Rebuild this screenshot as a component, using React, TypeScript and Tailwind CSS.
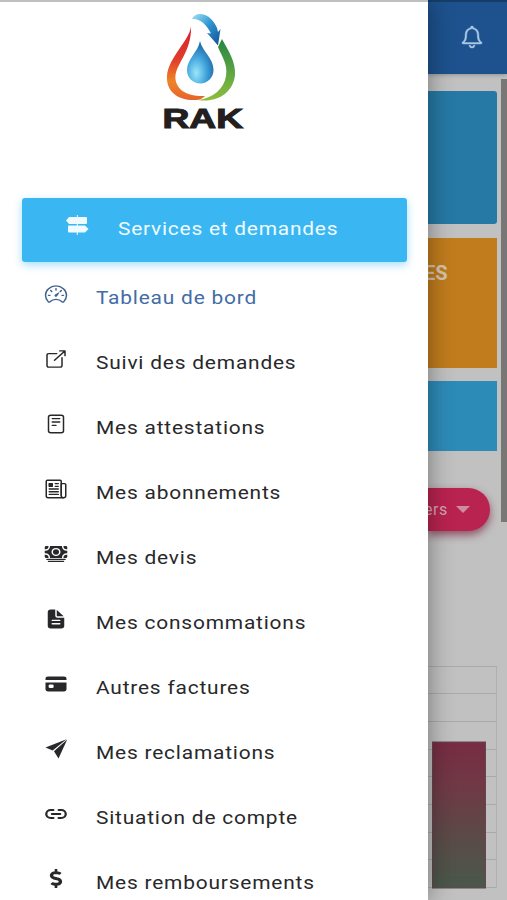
import React from 'react';
import {
  IoSpeedometerOutline,
  IoOpenOutline,
  IoReaderOutline,
  IoNewspaperOutline,
  IoCash,
  IoDocumentText,
  IoCard,
  IoLink,
} from 'react-icons/io5';
import { IoIosNotificationsOutline } from 'react-icons/io';
import { FaDollarSign } from 'react-icons/fa';

const PlaneIcon = ({ className }: { className?: string }) => (
  <svg viewBox="0 0 24 24" fill="currentColor" className={className}>
    <path d="M22.500 1.200L1.500 10.200l7.200 3.600z" />
    <path d="M23.200 1.500L10 14.600l4.500 7.900z" />
  </svg>
);

const menuItems = [
  { label: 'Tableau de bord', icon: IoSpeedometerOutline, className: 'size-6 scale-y-90 text-[#41638d]', active: true },
  { label: 'Suivi des demandes', icon: IoOpenOutline, className: 'size-6 scale-y-90' },
  { label: 'Mes attestations', icon: IoReaderOutline, className: 'size-6 scale-y-90' },
  { label: 'Mes abonnements', icon: IoNewspaperOutline, className: 'size-6 scale-y-90' },
  { label: 'Mes devis', icon: IoCash, className: 'size-6 scale-y-90' },
  { label: 'Mes consommations', icon: IoDocumentText, className: 'size-6 scale-y-90' },
  { label: 'Autres factures', icon: IoCard, className: 'size-6 scale-y-90' },
  { label: 'Mes reclamations', icon: PlaneIcon, className: 'size-6 scale-y-90' },
  { label: 'Situation de compte', icon: IoLink, className: 'size-6 scale-y-90' },
  { label: 'Mes remboursements', icon: FaDollarSign, className: 'mx-[2px] h-[19px] w-[20px] scale-x-115' },
];

const Logo = () => (
  <svg width="84" height="124" viewBox="0 0 84 124" className="ml-[161px]">
    <defs>
      <linearGradient id="warm" x1="0" y1="0" x2="0" y2="1">
        <stop offset="0" stopColor="#d71f30" />
        <stop offset="0.45" stopColor="#e13c2b" />
        <stop offset="0.75" stopColor="#ef8427" />
        <stop offset="1" stopColor="#e5632c" />
      </linearGradient>
      <linearGradient id="green" x1="0" y1="0" x2="0" y2="1">
        <stop offset="0" stopColor="#258444" />
        <stop offset="0.6" stopColor="#64a943" />
        <stop offset="1" stopColor="#8fbd3c" />
      </linearGradient>
      <linearGradient id="arrow" x1="0" y1="0" x2="1" y2="1">
        <stop offset="0" stopColor="#a5e3f4" />
        <stop offset="0.45" stopColor="#2e97d2" />
        <stop offset="1" stopColor="#124d94" />
      </linearGradient>
      <radialGradient id="drop" cx="0.35" cy="0.75" r="0.75">
        <stop offset="0" stopColor="#9be6fb" />
        <stop offset="0.5" stopColor="#43a5dc" />
        <stop offset="1" stopColor="#17619f" />
      </radialGradient>
    </defs>
    <path
      d="M30 16C29 30 7 48 6 66C5 83 19 91 35 90C39 90 42 88 44 86C30 87 16 82 14.500 69C13 55 31 43 30 16Z"
      fill="url(#warm)"
    />
    <path
      d="M61 29C67 40 75 52 74 65C72 83 56 93 37 90C52 88 63 79 65 66C67 54 61 47 57 37Z"
      fill="url(#green)"
    />
    <path
      d="M31 9C34 2 44 3 50 9C53 12 56 16 57 22L59.500 19L57 35.500L46 23L50 23.500C46 15 39 8 31 9Z"
      fill="url(#arrow)"
    />
    <path
      d="M39 31C41 41 52.500 48 52.500 60C52.500 68 46 73.500 39.500 73.500C32 73.500 26 68 26 60C26 49 37 42 39 31Z"
      fill="url(#drop)"
    />
    <text
      x="1.500"
      y="118"
      fontFamily="Liberation Sans, sans-serif"
      fontWeight="700"
      fontSize="28"
      fill="#231f20"
      stroke="#231f20"
      strokeWidth="1.1"
      textLength="80.500"
      lengthAdjust="spacingAndGlyphs"
    >
      RAK
    </text>
  </svg>
);

const SignsIcon = () => (
  <svg width="24" height="20" viewBox="0 0 24 20" fill="currentColor" className="mb-[10px]">
    <path d="M11.800 0h1v20h-1z" />
    <path d="M4 2h17q1 0 1 1v5q0 1-1 1H4L1 5.500z" />
    <path d="M4 10.500h16L23.500 14 20 17.500H4q-1 0-1-1v-5q0-1 1-1z" />
  </svg>
);

const Sidebar = () => (
  <aside className="relative z-10 w-[428px] shrink-0 bg-white pt-[10px] shadow-[0_0_24px_rgba(0,0,0,0.4)]">
    <Logo />
    <div className="mt-[64px] ml-[22px] flex h-[64px] w-[385px] items-center rounded-[3px] bg-[#3ab7f3] pl-[43px] text-[#effbff] shadow-[0_3px_9px_rgba(58,183,243,0.45)]">
      <SignsIcon />
      <span className="mb-[1px] ml-[29px] origin-left scale-x-110 text-[19px] tracking-[0.7px]">
        Services et demandes
      </span>
    </div>
    <nav className="mt-[3px]">
      {menuItems.map(({ label, icon: Icon, className, active }) => (
        <a
          key={label}
          className={
            active
              ? 'flex h-[65px] items-center pl-[44px] text-[#426ca6]'
              : 'flex h-[65px] items-center pl-[44px] text-[#28282a]'
          }
        >
          <span className="mb-[8px]">
            <Icon className={className} />
          </span>
          <span className="mt-[2px] ml-[28px] origin-left scale-x-110 text-[19px] tracking-[0.73px] whitespace-nowrap">
            {label}
          </span>
        </a>
      ))}
    </nav>
  </aside>
);

const Chart = () => (
  <svg width="79" height="234" viewBox="0 0 79 234" className="mt-[133px] block">
    <defs>
      <linearGradient id="bar" x1="0" y1="0" x2="0" y2="1">
        <stop offset="0" stopColor="#772c44" />
        <stop offset="0.3" stopColor="#703945" />
        <stop offset="0.65" stopColor="#5b4a48" />
        <stop offset="1" stopColor="#49584b" />
      </linearGradient>
    </defs>
    {[3, 30, 58, 86, 113, 141, 169, 196, 224].map((y) => (
      <line key={y} x1="0" x2="69" y1={y - 0.5} y2={y - 0.5} stroke="#aaa" />
    ))}
    <line x1="68.500" x2="68.500" y1="3" y2="224" stroke="#b0b0b0" />
    <rect x="4.500" y="78" width="53" height="146" fill="url(#bar)" stroke="#68454e" />
  </svg>
);

const Dashboard = () => (
  <main className="flex h-full flex-1 flex-col overflow-hidden bg-[#c1c1c1]">
    <header className="flex h-[74px] shrink-0 items-center bg-[#1d528e] pl-[29px] shadow-[0_1px_4px_rgba(0,0,0,0.25)]">
      <IoIosNotificationsOutline
        className="h-[28px] w-[30px] scale-x-115 text-[#a9c9e5]"
        stroke="currentColor"
        strokeWidth="8"
      />
    </header>
    <div className="flex min-h-0 flex-1">
      <div className="w-[73px] shrink-0 pt-[17px]">
        <div className="h-[133px] w-[69px] rounded-r-[3px] bg-[#2679a5]" />
        <div className="mt-[14px] h-[130px] w-[69px] bg-[#c17c1d] pt-[22px]">
          <span className="-ml-[4px] block text-[20px] leading-[26px] font-bold text-[#d6c4ad]">ES</span>
        </div>
        <div className="mt-[13px] h-[70px] w-[69px] bg-[#2d8bb8]" />
        <div className="mt-[37px] flex h-[43px] w-[62px] items-center rounded-r-full bg-[#b9234f] text-[#d5a5b5] shadow-[0_4px_8px_rgba(115,20,50,0.65)]">
          <span className="-ml-[4px] text-[16px] tracking-[0.5px]">ers</span>
          <span className="ml-[8px] border-x-[7px] border-t-[7px] border-x-transparent border-t-[#ce8da3]" />
        </div>
        <Chart />
      </div>
      <div className="mt-[5px] h-[443px] w-[6px] bg-[#797776]" />
    </div>
  </main>
);

const App = () => {
  return (
    <div className="relative flex h-[900px] w-[507px] overflow-hidden bg-white font-[Roboto,sans-serif]">
      <Sidebar />
      <Dashboard />
      {/* edge of the status bar */}
      <div className="absolute inset-x-0 top-0 z-20 h-[2px] bg-black/25" />
    </div>
  );
};

export default App;
